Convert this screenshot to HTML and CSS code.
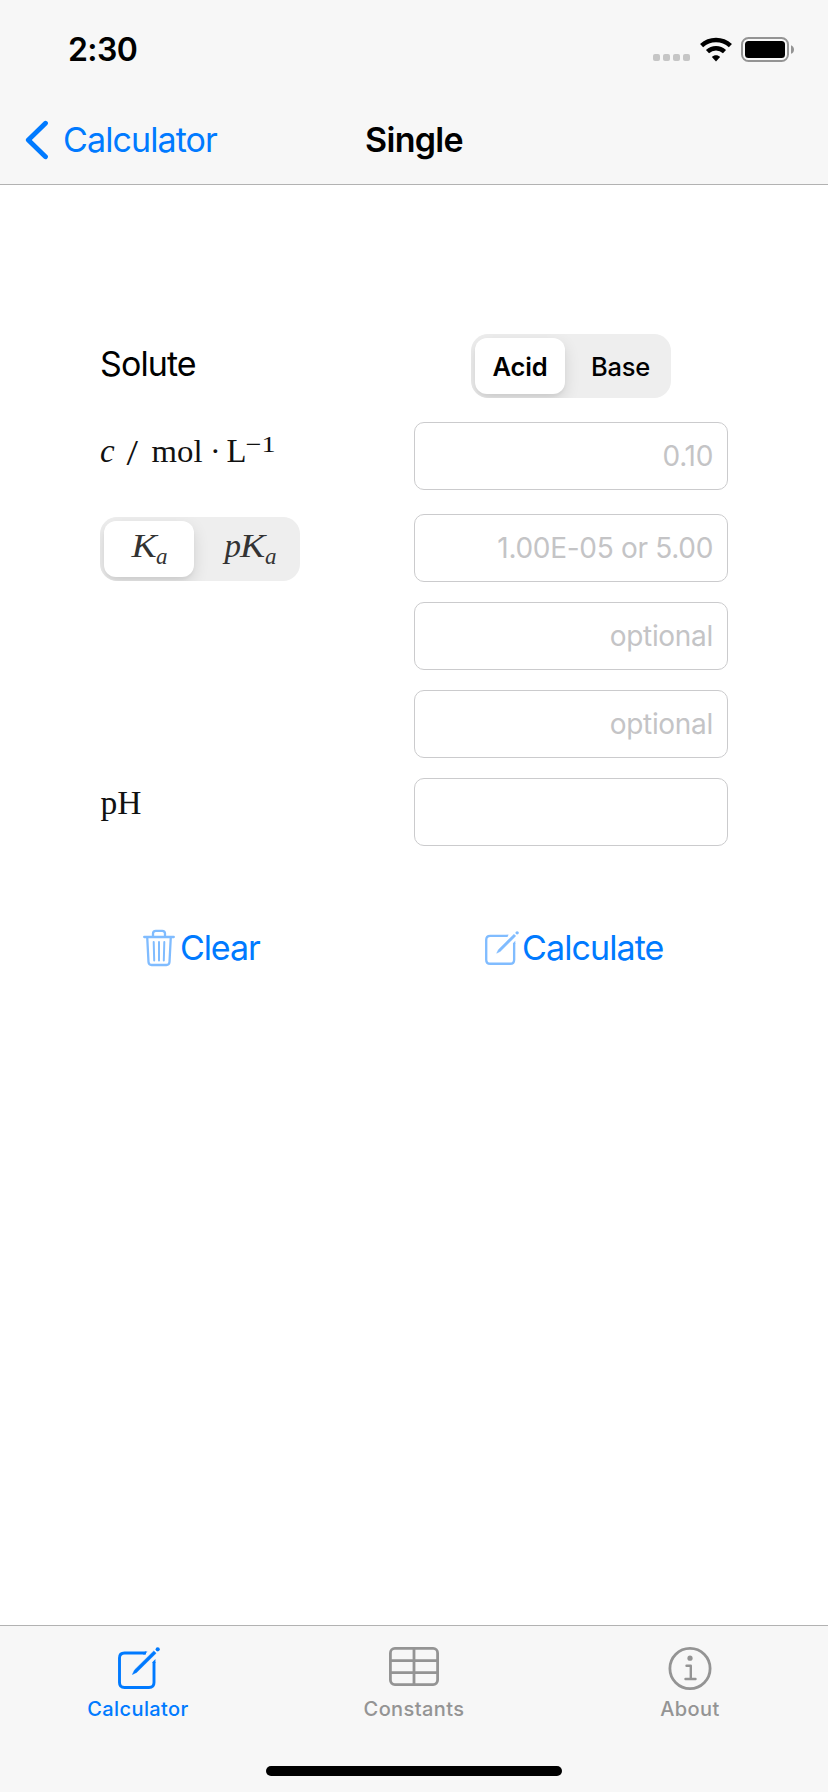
FILE: index.html
```html
<!DOCTYPE html>
<html lang="en">
<head>
<meta charset="utf-8">
<title>Single</title>
<link rel="stylesheet" href="styles.css">
</head>
<body>
<div class="screen">
  <header class="header">
    <div class="status">
      <span class="time">2:30</span>
      <div class="indicators">
        <span class="signal"><i></i><i></i><i></i><i></i></span>
        <svg class="wifi" width="34" height="26" viewBox="0 0 34 26">
          <path d="M2.600 8.600C10.800 1.200 23.200 1.200 31.400 8.600" fill="none" stroke="#000" stroke-width="4.6"/>
          <path d="M8.500 14.600C13.400 10.200 20.600 10.200 25.500 14.600" fill="none" stroke="#000" stroke-width="4.6"/>
          <path d="M17 24.500L12.900 20C15 17.600 19 17.600 21.100 20Z"/>
        </svg>
        <svg class="battery" width="54" height="26" viewBox="0 0 54 26">
          <rect x="1" y="1" width="46" height="23" rx="6.500" fill="none" stroke="#949494" stroke-width="2"/>
          <rect x="4" y="4" width="40" height="17" rx="3.500"/>
          <path d="M50 8.200C54 9.500 54 15.500 50 16.800Z" fill="#949494"/>
        </svg>
      </div>
    </div>
    <nav class="nav">
      <a class="back">
        <svg width="24" height="40" viewBox="0 0 24 40"><path d="M20.500 3.200L3.300 20L20.500 36.800" fill="none" stroke="#007aff" stroke-width="4.800" stroke-linecap="round" stroke-linejoin="round"/></svg>
        <span class="back-label">Calculator</span>
      </a>
      <h1 class="title">Single</h1>
      <span></span>
    </nav>
  </header>

  <main class="form">
    <div class="row row-solute">
      <span class="label">Solute</span>
      <div class="field center">
        <div class="segmented">
          <span class="segment selected">Acid</span>
          <span class="segment base">Base</span>
        </div>
      </div>
    </div>
    <div class="row row-wide">
      <svg class="math" width="200" height="68" viewBox="0 0 200 68">
        <text x="0" y="40" font-size="33" font-style="italic">c</text>
        <text x="26.500" y="42.500" font-size="36" textLength="11.500" lengthAdjust="spacingAndGlyphs">/</text>
        <text x="51.500" y="40" font-size="32" textLength="51" lengthAdjust="spacingAndGlyphs">mol</text>
        <text x="110" y="40" font-size="32">·</text>
        <text x="126.500" y="40" font-size="33" textLength="20" lengthAdjust="spacingAndGlyphs">L</text>
        <text x="145.500" y="30" font-size="23" textLength="30" lengthAdjust="spacingAndGlyphs">−1</text>
      </svg>
      <input class="field input" placeholder="0.10">
    </div>
    <div class="row row-wide">
      <div class="segmented">
        <span class="segment selected">
          <svg class="math small" width="90" height="56" viewBox="0 0 90 56">
            <text x="27.500" y="35.500" font-size="34" textLength="25" lengthAdjust="spacingAndGlyphs">K</text>
            <text x="52" y="43" font-size="23">a</text>
          </svg>
        </span>
        <span class="segment">
          <svg class="math small" width="102" height="56" viewBox="0 0 102 56">
            <text x="30.500" y="35.500" font-size="33">p</text>
            <text x="46" y="35.500" font-size="34" textLength="25" lengthAdjust="spacingAndGlyphs">K</text>
            <text x="71" y="43" font-size="23">a</text>
          </svg>
        </span>
      </div>
      <input class="field input" placeholder="1.00E-05 or 5.00">
    </div>
    <div class="row"><span></span><input class="field input" placeholder="optional"></div>
    <div class="row"><span></span><input class="field input" placeholder="optional"></div>
    <div class="row">
      <svg class="math" width="100" height="68" viewBox="0 0 100 68">
        <text x="0.500" y="35.500" font-size="33" textLength="41" lengthAdjust="spacingAndGlyphs">pH</text>
      </svg>
      <input class="field input">
    </div>
    <div class="actions">
      <button class="action">
        <svg width="32" height="38" viewBox="0 0 32 38" fill="none" stroke="#80bcff" stroke-width="2.300" stroke-linecap="round" stroke-linejoin="round">
          <path d="M1.200 8H30.800M4.200 8L5.500 33Q5.700 36 8.600 36H23.400Q26.300 36 26.500 33L27.800 8M10 8V4.500Q10 1.800 12.800 1.800H19.200Q22 1.800 22 4.500V8"/>
          <path d="M10.700 13L11.200 31.500M16 13V31.500M21.300 13L20.800 31.500" stroke-width="2"/>
        </svg>
        <span class="clear-label">Clear</span>
      </button>
      <button class="action">
        <svg class="compose" width="34" height="34" viewBox="0 0 42 42">
          <use href="#compose" color="#80bcff"/>
        </svg>
        <span class="calculate-label">Calculate</span>
      </button>
    </div>
  </main>

  <footer class="tabs">
    <div class="tab active">
      <svg width="42" height="43" viewBox="0 0 42 43">
        <g id="compose">
          <path d="M28 6H6.500Q1.500 6 1.500 11V35.500Q1.500 40.500 6.500 40.500H31Q36 40.500 36 35.500V15" fill="none" stroke="currentColor" stroke-width="2.900"/>
          <path d="M27 4.550H29.500L26.600 7.450H25Z" fill="currentColor"/>
          <path d="M35.800 3.900L38.100 6.200L18.800 25.300L14.400 27.500L16.500 23.100Z" fill="currentColor" stroke="currentColor" stroke-width="0.500" stroke-linejoin="round"/>
          <circle cx="39.700" cy="2.300" r="2.100" fill="currentColor"/>
          <path d="M34.550 15L37.450 12.100V16H34.550Z" fill="currentColor"/>
        </g>
      </svg>
      <span>Calculator</span>
    </div>
    <div class="tab">
      <svg width="50" height="43" viewBox="0 0 50 43" fill="none" stroke="currentColor" stroke-width="2.800">
        <rect x="1.400" y="1.400" width="47.200" height="36.200" rx="4.500"/>
        <path d="M1.400 13.600H48.600M1.400 25.600H48.600M25 1.400V37.600"/>
      </svg>
      <span>Constants</span>
    </div>
    <div class="tab">
      <svg width="44" height="43" viewBox="0 0 44 43" fill="none" stroke="currentColor">
        <circle cx="22" cy="21.500" r="20.100" stroke-width="2.800"/>
        <circle cx="22" cy="11.200" r="2.600" fill="currentColor" stroke="none"/>
        <path d="M18.500 18.700H22.800V32M17.500 32H27.500" stroke-width="2.400" stroke-linecap="round" stroke-linejoin="round"/>
      </svg>
      <span>About</span>
    </div>
    <div class="home-indicator"></div>
  </footer>
</div>
</body>
</html>
```

FILE: styles.css
```css
* { box-sizing: border-box; }

body {
  margin: 0;
  background: #fff;
  color: #000;
  font-family: Inter, "Liberation Sans", sans-serif;
}

svg { display: block; flex: none; }

.screen {
  width: 828px;
  height: 1792px;
  display: flex;
  flex-direction: column;
}

.header {
  height: 185px;
  background: #f7f7f7;
  border-bottom: 1px solid #b2b2b2;
}

.status {
  height: 96px;
  display: flex;
  justify-content: space-between;
  padding: 0 33px 0 68px;
}

.time {
  font-size: 32px;
  font-weight: 600;
  line-height: 39px;
  margin-top: 30px;
  letter-spacing: -0.6px;
}

.indicators {
  display: flex;
  align-items: flex-start;
  padding-top: 37px;
}

.signal {
  display: flex;
  gap: 3px;
  margin: 17px 9px 0 0;
}

.signal i {
  width: 7px;
  height: 7px;
  border-radius: 2px;
  background: #c6c6c6;
}

.wifi { margin-right: 8px; }

.nav {
  height: 88px;
  display: grid;
  grid-template-columns: 1fr auto 1fr;
  align-items: center;
  padding: 0 25px;
}

.back {
  display: flex;
  align-items: center;
  gap: 14px;
  color: #007aff;
}

.back-label, .title, .label {
  font-size: 34px;
  line-height: 42px;
  letter-spacing: -0.9px;
}

.title {
  margin: 0;
  font-weight: 600;
  letter-spacing: -0.7px;
}

.form {
  flex: 1;
  padding: 149px 100px 0;
}

.row {
  display: flex;
  justify-content: space-between;
  height: 68px;
  margin-top: 20px;
}

.row-solute {
  height: 64px;
  margin-top: 0;
}

.row-wide { margin-top: 24px; }

.label { padding-top: 9px; }

.field { width: 314px; }

.center {
  display: flex;
  justify-content: center;
}

.segmented {
  display: flex;
  width: 200px;
  height: 64px;
  margin-top: 3px;
  padding: 4px;
  border-radius: 17px;
  background: #eee;
  overflow: hidden;
}

.row-solute .segmented { margin-top: 0; }

.segment {
  width: 102px;
  height: 56px;
  display: flex;
  align-items: center;
  justify-content: center;
  font-size: 25.5px;
  line-height: 31px;
  font-weight: 500;
  letter-spacing: -0.2px;
}

.selected {
  width: 90px;
  border-radius: 12px;
  background: #fff;
  font-weight: 600;
  box-shadow: 0 6px 16px rgba(0, 0, 0, 0.12), 0 3px 3px rgba(0, 0, 0, 0.04);
}

.base { padding-left: 9px; }

.math {
  font-family: "Liberation Serif", serif;
  font-weight: 400;
  fill: #111;
}

.small {
  font-style: italic;
  fill: #333;
}

.input {
  height: 68px;
  padding: 0 14px;
  border: 1px solid #cbcbcd;
  border-radius: 10px;
  background: #fff;
  font: 28px/34px Inter, "Liberation Sans", sans-serif;
  letter-spacing: -0.3px;
  text-align: right;
}

.input::placeholder {
  color: #c4c4c6;
  opacity: 1;
}

.actions {
  display: flex;
  height: 60px;
  margin-top: 72px;
  padding-left: 43px;
}

.action {
  display: flex;
  align-items: center;
  height: 60px;
  padding: 0;
  border: 0;
  background: none;
  color: #007aff;
  font: 34px/42px Inter, "Liberation Sans", sans-serif;
  letter-spacing: -0.9px;
}

.action:first-child { width: 342px; }

.clear-label {
  margin-left: 5px;
  letter-spacing: -1.1px;
}

.calculate-label { margin-left: 3px; }

.tabs {
  position: relative;
  height: 167px;
  display: flex;
  background: #f7f7f7;
  border-top: 1px solid #b2b2b2;
}

.tab {
  flex: 1;
  display: flex;
  flex-direction: column;
  align-items: center;
  gap: 7px;
  padding-top: 21px;
  color: #949494;
  font-size: 20px;
  line-height: 24px;
  font-weight: 500;
  letter-spacing: 0.4px;
}

.active { color: #007aff; }

.active svg { margin-left: 2px; }

.home-indicator {
  position: absolute;
  left: 266px;
  bottom: 16px;
  width: 296px;
  height: 10px;
  border-radius: 5px;
  background: #000;
}
```
